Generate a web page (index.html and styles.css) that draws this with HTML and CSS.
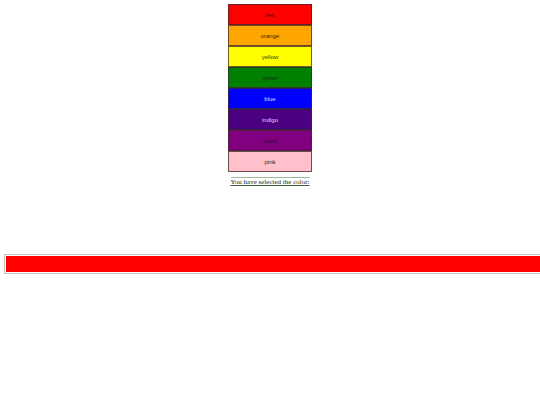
FILE: index.html
```html
<!DOCTYPE html>
<html>
<head>
<meta charset="utf-8">
<link rel="stylesheet" href="styles.css">
</head>
<body>
<div class="picker">
  <div class="swatch red">red</div>
  <div class="swatch orange">orange</div>
  <div class="swatch yellow">yellow</div>
  <div class="swatch green">green</div>
  <div class="swatch blue">blue</div>
  <div class="swatch indigo">indigo</div>
  <div class="swatch violet">violet</div>
  <div class="swatch pink">pink</div>
  <div class="caption">You have selected the color:</div>
</div>
<div class="bar"></div>
</body>
</html>
```
FILE: styles.css
```css
html, body { margin: 0; padding: 0; background: #fff; overflow: hidden; }
body { width: 540px; height: 405px; }
.picker {
  display: flex;
  flex-direction: column;
  align-items: center;
  padding-top: 4px;
}
.swatch {
  box-sizing: border-box;
  width: 84px;
  height: 21px;
  border: 1px solid rgba(60, 40, 40, 0.75);
  display: flex;
  align-items: center;
  justify-content: center;
  font-family: "Liberation Sans", Arial, sans-serif;
  font-size: 6px;
}
.red { background: #ff0000; color: #600000; }
.orange { background: #ffa500; color: #3a2a00; }
.yellow { background: #ffff00; color: #3a3a10; }
.green { background: #008000; color: #103010; }
.blue { background: #0000ff; color: #dcdcff; }
.indigo { background: #4b0082; color: #e0d0ff; }
.violet { background: #800080; color: #300030; }
.pink { background: #ffc0cb; color: #222; }
.caption {
  margin-top: 5px;
  border-top: 1px solid #9cb89c;
  padding-top: 0;
  font-family: "Liberation Serif", "Times New Roman", serif;
  font-size: 7px;
  color: #102810;
  text-decoration: underline;
  text-decoration-color: #3a5a3a;
  line-height: 9px;
}
.bar {
  box-sizing: border-box;
  margin-top: 67px;
  margin-left: 4px;
  width: 560px;
  height: 20px;
  border: 1px solid #c4c0c4;
  padding: 1px;
  background: #fff;
}
.bar::before {
  content: "";
  display: block;
  height: 100%;
  background: #ff0000;
}
```
